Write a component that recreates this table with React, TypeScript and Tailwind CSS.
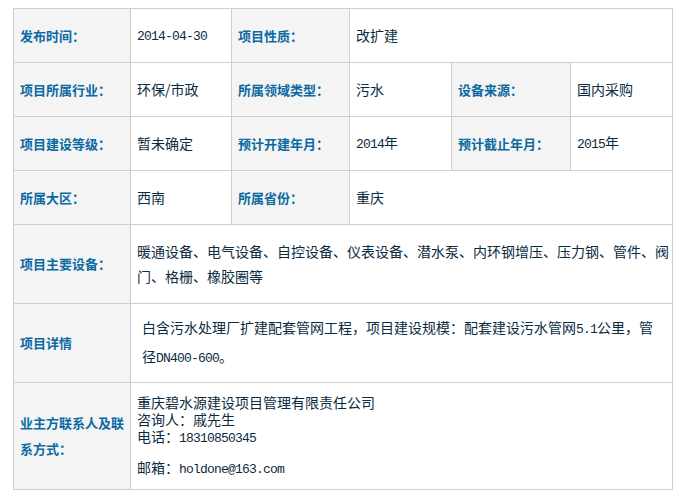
import React from "react";

const L = ({ children, span }: { children: React.ReactNode; span?: number }) => (
  <td
    colSpan={span}
    className="border border-[#cfcfcf] bg-[#f4f4f4] pl-[6px] pr-[2px] align-middle text-[13px] font-bold leading-[26px] text-[#0a6aa1]"
  >
    {children}
  </td>
);

const V = ({ children, span, cls = "" }: { children: React.ReactNode; span?: number; cls?: string }) => (
  <td
    colSpan={span}
    className={`border border-[#cfcfcf] bg-white pl-[6px] pr-[2px] align-middle text-[14px] text-[#0b2b3f] ${cls}`}
  >
    {children}
  </td>
);

const M = ({ children }: { children: React.ReactNode }) => (
  <span className="font-['Liberation_Mono',monospace] text-[13px] tracking-[-0.8px]">{children}</span>
);

export default function App() {
  return (
    <div className="min-h-[499px] w-[683px] bg-white pl-[13px] pt-[8px] font-['Noto_Sans_CJK_SC','Noto_Sans',sans-serif]">
      <table className="w-[659px] table-fixed border-collapse">
        <colgroup>
          <col className="w-[117px]" />
          <col className="w-[101px]" />
          <col className="w-[118px]" />
          <col className="w-[102px]" />
          <col className="w-[119px]" />
          <col className="w-[102px]" />
        </colgroup>
        <tbody>
          <tr className="h-[54px]">
            <L>发布时间：</L>
            <V><M>2014-04-30</M></V>
            <L>项目性质：</L>
            <V span={3}>改扩建</V>
          </tr>
          <tr className="h-[54px]">
            <L>项目所属行业：</L>
            <V>环保/市政</V>
            <L>所属领域类型：</L>
            <V>污水</V>
            <L>设备来源：</L>
            <V>国内采购</V>
          </tr>
          <tr className="h-[54px]">
            <L>项目建设等级：</L>
            <V>暂未确定</V>
            <L>预计开建年月：</L>
            <V><M>2014</M>年</V>
            <L>预计截止年月：</L>
            <V><M>2015</M>年</V>
          </tr>
          <tr className="h-[54px]">
            <L>所属大区：</L>
            <V>西南</V>
            <L>所属省份：</L>
            <V span={3}>重庆</V>
          </tr>
          <tr className="h-[79px]">
            <L>项目主要设备：</L>
            <V span={5} cls="leading-[25px] whitespace-nowrap">
              暖通设备、电气设备、自控设备、仪表设备、潜水泵、内环钢增压、压力钢、管件、阀
              <br />
              门、格栅、橡胶圈等
            </V>
          </tr>
          <tr className="h-[79px]">
            <L>项目详情</L>
            <V span={5} cls="leading-[26px] whitespace-nowrap !pl-[11px]">
              白含污水处理厂扩建配套管网工程，项目建设规模：配套建设污水管网<M>5.1</M>公里，管
              <br />
              径<M>DN400-600</M>。
            </V>
          </tr>
          <tr className="h-[107px]">
            <L>
              业主方联系人及联
              <br />
              系方式：
            </L>
            <V span={5} cls="leading-[17px] whitespace-nowrap">
              <div>重庆碧水源建设项目管理有限责任公司</div>
              <div>咨询人：戚先生</div>
              <div>电话：<M>18310850345</M></div>
              <div className="mt-[12px]">邮箱：<M>holdone@163.com</M></div>
            </V>
          </tr>
        </tbody>
      </table>
    </div>
  );
}
